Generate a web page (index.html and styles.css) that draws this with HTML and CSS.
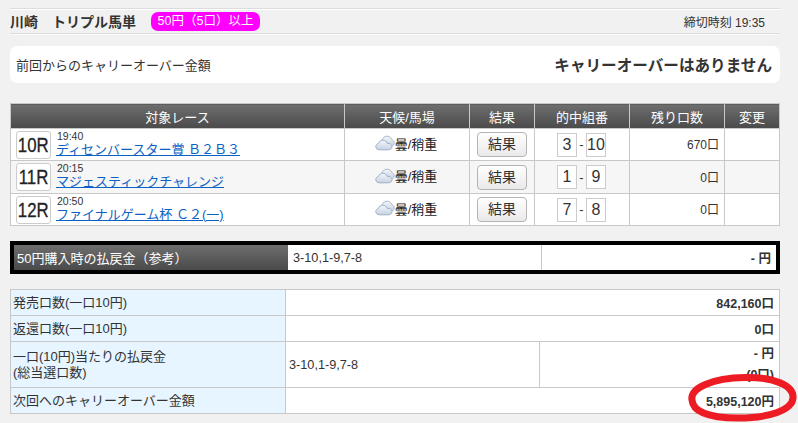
FILE: index.html
```html
<!DOCTYPE html>
<html lang="ja">
<head>
<meta charset="utf-8">
<title>川崎 トリプル馬単</title>
<link rel="stylesheet" href="styles.css">
</head>
<body>
<div class="page">
  <header class="head">
    <div class="head-left">
      <span class="head-title">川崎　トリプル馬単</span>
      <span class="pill">50円（5口）以上</span>
    </div>
    <div class="head-time">締切時刻 19:35</div>
  </header>

  <section class="carry">
    <span class="carry-label">前回からのキャリーオーバー金額</span>
    <strong class="carry-value">キャリーオーバーはありません</strong>
  </section>

  <table class="races">
    <thead>
      <tr>
        <th class="c-race">対象レース</th>
        <th class="c-weather">天候/馬場</th>
        <th class="c-result">結果</th>
        <th class="c-combo">的中組番</th>
        <th class="c-left">残り口数</th>
        <th>変更</th>
      </tr>
    </thead>
    <tbody>
      <tr>
        <td><div class="race"><span class="badge"><span class="badge-text">10R</span></span><div class="race-info"><span class="race-time">19:40</span><a href="#" class="race-name">ディセンバースター賞 Ｂ２Ｂ３</a></div></div></td>
        <td><div class="weather"><svg class="cloud" viewBox="0 0 20 16"><use href="#cloud-shape"/></svg>曇/稍重</div></td>
        <td class="center"><span class="btn">結果</span></td>
        <td><div class="combo"><span class="num">3</span><span class="dash">-</span><span class="num">10</span></div></td>
        <td class="right">670口</td>
        <td></td>
      </tr>
      <tr class="alt">
        <td><div class="race"><span class="badge"><span class="badge-text">11R</span></span><div class="race-info"><span class="race-time">20:15</span><a href="#" class="race-name">マジェスティックチャレンジ</a></div></div></td>
        <td><div class="weather"><svg class="cloud" viewBox="0 0 20 16"><use href="#cloud-shape"/></svg>曇/稍重</div></td>
        <td class="center"><span class="btn">結果</span></td>
        <td><div class="combo"><span class="num">1</span><span class="dash">-</span><span class="num">9</span></div></td>
        <td class="right">0口</td>
        <td></td>
      </tr>
      <tr>
        <td><div class="race"><span class="badge"><span class="badge-text">12R</span></span><div class="race-info"><span class="race-time">20:50</span><a href="#" class="race-name">ファイナルゲーム杯 Ｃ２(一)</a></div></div></td>
        <td><div class="weather"><svg class="cloud" viewBox="0 0 20 16"><use href="#cloud-shape"/></svg>曇/稍重</div></td>
        <td class="center"><span class="btn">結果</span></td>
        <td><div class="combo"><span class="num">7</span><span class="dash">-</span><span class="num">8</span></div></td>
        <td class="right">0口</td>
        <td></td>
      </tr>
    </tbody>
  </table>

  <table class="refund">
    <colgroup><col class="rc-label"><col class="rc-combo"><col></colgroup>
    <tr>
      <th class="r-label">50円購入時の払戻金（参考）</th>
      <td class="r-combo">3-10,1-9,7-8</td>
      <td class="r-amount">- 円</td>
    </tr>
  </table>

  <table class="sales">
    <colgroup><col class="sc-label"><col class="sc-combo"><col></colgroup>
    <tr class="row-s">
      <th>発売口数(一口10円)</th>
      <td colspan="2" class="amount">842,160口</td>
    </tr>
    <tr class="row-s">
      <th>返還口数(一口10円)</th>
      <td colspan="2" class="amount">0口</td>
    </tr>
    <tr class="row-l">
      <th>一口(10円)当たりの払戻金<br>(総当選口数)</th>
      <td class="s-combo">3-10,1-9,7-8</td>
      <td class="amount s-pay">- 円<br>(0口)</td>
    </tr>
    <tr class="row-s">
      <th>次回へのキャリーオーバー金額</th>
      <td colspan="2" class="amount">5,895,120円</td>
    </tr>
  </table>
</div>

<svg class="defs" width="0" height="0" aria-hidden="true">
  <defs>
    <linearGradient id="cloud-fill" x1="0" y1="0" x2="0" y2="1">
      <stop offset="0" stop-color="#f4f7fb"/>
      <stop offset="1" stop-color="#c6d2e2"/>
    </linearGradient>
    <symbol id="cloud-shape" viewBox="0 0 20 16">
      <path d="M7 5.2C7.6 2.6 9.6 1.2 12 1.2c2.3 0 4.100 1.300 4.700 3.400 1.500.4 2.500 1.700 2.500 3.200 0 1.300-.7 2.300-1.700 2.900H7z" fill="url(#cloud-fill)" stroke="#aab8cc" stroke-width="1"/>
      <path d="M4.200 14.800C2.200 14.800.8 13.400.8 11.600c0-1.600 1.100-2.900 2.700-3.200C4 6.400 5.700 5.200 7.700 5.200c2.200 0 4 1.300 4.500 3.200 2.400-.3 4.800.8 4.800 3.200 0 2-1.700 3.200-3.500 3.200z" fill="url(#cloud-fill)" stroke="#9fb0c8" stroke-width="1"/>
    </symbol>
  </defs>
</svg>

<svg class="mark" viewBox="0 0 798 423" aria-hidden="true">
  <path d="M692 400C690 388 712 378 745 377.500 775 377 794 386 793 398 792 410 770 418 738 418 710 418 693 412 692 400Z" fill="none" stroke="#ed1c24" stroke-width="7"/>
</svg>
</body>
</html>
```
FILE: styles.css
```css
* { box-sizing: border-box; }
html, body { margin: 0; height: 100%; overflow: hidden; }
body {
  background: #f1f1f1;
  color: #333;
  font-family: "Liberation Sans", "Noto Sans CJK JP", sans-serif;
  font-size: 12px;
  position: relative;
}
.page { width: 770px; margin-left: 10px; padding-top: 8px; }

.head {
  height: 26px;
  display: flex;
  align-items: center;
  justify-content: space-between;
  border-top: 1px solid #dcdcdc;
  border-bottom: 1px solid #dcdcdc;
  box-shadow: inset 0 1px 0 #fff, 0 1px 0 #fafafa;
}
.head-left { display: flex; align-items: center; }
.head-title { font-size: 14px; font-weight: 700; width: 141px; white-space: nowrap; }
.pill {
  background: #f0f;
  color: #fff;
  font-size: 12.5px;
  line-height: 19px;
  height: 19px;
  width: 109px;
  text-align: center;
  border-radius: 7px;
  white-space: nowrap;
}
.head-time { font-size: 12px; padding-right: 15px; }

.carry {
  margin-top: 12px;
  height: 37px;
  background: #fff;
  border-radius: 7px;
  display: flex;
  align-items: center;
  justify-content: space-between;
  padding: 0 8px 0 6px;
}
.carry-label { font-size: 13px; margin-top: -1px; }
.carry-value { font-size: 15.6px; font-weight: 700; white-space: nowrap; margin-top: -2px; }

table { border-collapse: collapse; table-layout: fixed; }

.races {
  width: 770px;
  margin-top: 20px;
  background: #fff;
}
.races th, .races td { border: 1px solid #c8c8c8; padding: 0; }
.races th {
  height: 25px;
  background: linear-gradient(#6e6e6e, #4a4a4a);
  color: #fff;
  font-weight: 400;
  font-size: 13px;
  text-align: center;
}
.races td { height: 32px; font-size: 12px; }
.races .alt td { background: #f6f6f6; height: 33px; }
.c-race { width: 334px; }
.c-weather { width: 125px; }
.c-result { width: 65px; }
.c-combo { width: 95px; }
.c-left { width: 95px; }

.race { display: flex; align-items: center; padding-left: 5px; gap: 5px; }
.badge {
  width: 35px;
  height: 28px;
  flex: none;
  display: flex;
  align-items: center;
  justify-content: center;
  border: 1px solid #ccc;
  border-radius: 3px;
  background: #fff;
  color: #222;
  font-size: 21px;
  overflow: hidden;
}
.badge-text { display: inline-block; transform: scaleX(.8); -webkit-text-stroke: .3px #222; }
.race-info { display: flex; flex-direction: column; }
.race-time { font-size: 10.5px; line-height: 10px; padding-left: 1px; }
.race-name { font-size: 13px; line-height: 18px; color: #0b62c4; white-space: nowrap; }

.weather {
  display: flex;
  align-items: center;
  justify-content: center;
  padding: 0 2px 3px 0;
  font-size: 13px;
  color: #222;
}
.cloud { width: 20px; height: 16px; }
.defs { position: absolute; }

.center { text-align: center; }
.btn {
  display: inline-block;
  width: 50px;
  height: 25px;
  line-height: 23px;
  font-size: 14px;
  border: 1px solid #b4b4b4;
  border-radius: 4px;
  background: linear-gradient(#fff, #e9e9e9);
  vertical-align: middle;
}

.combo { display: flex; align-items: center; padding-left: 22px; }
.num {
  width: 20px;
  height: 24px;
  line-height: 22px;
  border: 1px solid #ccc;
  background: #fff;
  font-size: 16px;
  text-align: center;
}
.dash { width: 9px; text-align: center; font-size: 13px; }
.races td.right { text-align: right; padding: 0 5px 2px 0; }

.refund {
  width: 770px;
  margin-top: 15px;
  border-collapse: separate;
  border-spacing: 0;
  border: 4px solid #000;
  background: #fff;
}
.rc-label { width: 274px; }
.rc-combo { width: 254px; }
.refund th, .refund td { height: 25px; padding: 0; font-size: 12.7px; }
.refund th.r-label {
  background: linear-gradient(#6e6e6e, #4a4a4a);
  color: #fff;
  font-weight: 400;
  font-size: 13px;
  text-align: left;
  padding-left: 3px;
  white-space: nowrap;
}
.refund td.r-combo { padding-left: 5px; border-right: 1px solid #c8c8c8; }
.refund td.r-amount { text-align: right; padding-right: 5px; font-weight: 700; font-size: 12.5px; }

.sales {
  width: 770px;
  margin-top: 15px;
  background: #fff;
}
.sc-label { width: 275px; }
.sc-combo { width: 254px; }
.sales th, .sales td { border: 1px solid #c8c8c8; padding: 0; font-size: 12.7px; overflow: hidden; }
.sales th {
  background: #e6f5ff;
  font-weight: 400;
  font-size: 13px;
  line-height: 16px;
  text-align: left;
  padding-left: 2px;
}
.row-s th, .row-s td { height: 26px; }
.row-l th, .row-l td { height: 46px; }
.sales td.s-combo { padding-left: 3px; }
.sales td.amount { text-align: right; padding-right: 5px; font-weight: 700; font-size: 12.5px; }
.sales td.s-pay { line-height: 21px; }

.mark {
  position: absolute;
  left: 0;
  top: 0;
  width: 798px;
  height: 423px;
  pointer-events: none;
}
```
